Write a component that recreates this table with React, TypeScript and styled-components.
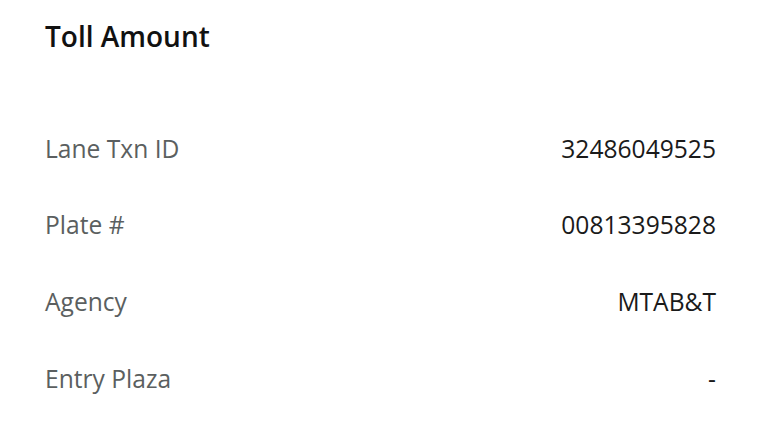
import React from 'react'
import styled, { createGlobalStyle } from 'styled-components'

const GlobalStyle = createGlobalStyle`
  body {
    margin: 0;
    background: #fff;
    font-family: 'Open Sans', 'Liberation Sans', sans-serif;
  }
`

const rows = [
  { label: 'Lane Txn ID', value: '32486049525' },
  { label: 'Plate #', value: '00813395828' },
  { label: 'Agency', value: 'MTAB&T' },
  { label: 'Entry Plaza', value: '-' },
]

const App = () => {
  return (
    <Page>
      <GlobalStyle />
      <Title>Toll Amount</Title>
      <List>
        {rows.map((r) => (
          <Row key={r.label}>
            <Label>{r.label}</Label>
            <Value>{r.value}</Value>
          </Row>
        ))}
      </List>
    </Page>
  )
}

export default App

const Page = styled.div`
  width: 762px;
  height: 441px;
  box-sizing: border-box;
  padding: 20px 46px 0 45px;
  display: flex;
  flex-direction: column;
`

const Title = styled.h1`
  margin: 0;
  font-size: 28px;
  line-height: 33.6px;
  font-weight: 600;
  color: #111;
`

const List = styled.div`
  margin-top: 79px;
  display: flex;
  flex-direction: column;
  gap: 44.7px;
`

const Row = styled.div`
  display: flex;
  justify-content: space-between;
  align-items: baseline;
  font-size: 24.6px;
  line-height: 32px;
`

const Label = styled.span`
  color: #5b5f60;
`

const Value = styled.span`
  color: #1a1a1a;
`
